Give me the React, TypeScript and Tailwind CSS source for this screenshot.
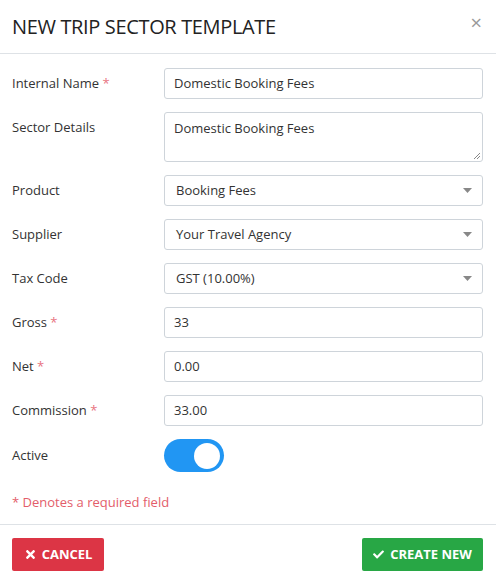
import React from "react";
import { FaTimes, FaCheck } from "react-icons/fa";

const font = { fontFamily: '"Open Sans", "Noto Sans", sans-serif' };

function Label({ text, required }: { text: string; required?: boolean }) {
  return (
    <div className="w-[152px] shrink-0 text-[13px] text-[#333]">
      {text}
      {required && <span className="text-[#e8747f]"> *</span>}
    </div>
  );
}

function InputRow({ label, value, required }: { label: string; value: string; required?: boolean }) {
  return (
    <div className="flex items-center">
      <Label text={label} required={required} />
      <div className="flex-1 h-[31px] border border-[#ced4da] rounded-[3px] px-[9px] flex items-center text-[13px] text-[#333]">
        {value}
      </div>
    </div>
  );
}

function SelectRow({ label, value }: { label: string; value: string }) {
  return (
    <div className="flex items-center">
      <Label text={label} />
      <div className="flex-1 h-[31px] border border-[#ced4da] rounded-[3px] pl-[11px] pr-[10px] flex items-center justify-between text-[13px] text-[#333]">
        <span>{value}</span>
        <svg width="9" height="5" viewBox="0 0 9 5">
          <path d="M0 0 L9 0 L4.5 5 Z" fill="#888" />
        </svg>
      </div>
    </div>
  );
}

export default function App() {
  return (
    <div className="w-[496px] h-[581px] bg-white overflow-hidden" style={font}>
      <div className="h-[54px] border-b border-[#dee2e6] flex items-center justify-between pl-[12px] pr-[14px]">
        <div className="text-[20px] text-[#222] tracking-[-0.35px] pt-[1px]">NEW TRIP SECTOR TEMPLATE</div>
        <div className="text-[20px] text-[#999] leading-none -mt-[8px]">×</div>
      </div>
      <div className="pt-[14px] pl-[12px] pr-[13px] flex flex-col gap-[13px]">
        <InputRow label="Internal Name" required value="Domestic Booking Fees" />
        <div className="flex items-start">
          <div className="pt-[6px]"><Label text="Sector Details" /></div>
          <div className="relative flex-1 h-[50px] border border-[#ced4da] rounded-[3px] px-[9px] pt-[6px] text-[13px] text-[#333]">
            Domestic Booking Fees
            <svg className="absolute right-[1px] bottom-[1px]" width="8" height="8" viewBox="0 0 8 8">
              <path d="M7 1 L1 7 M7 4 L4 7" stroke="#888" strokeWidth="1" />
            </svg>
          </div>
        </div>
        <SelectRow label="Product" value="Booking Fees" />
        <SelectRow label="Supplier" value="Your Travel Agency" />
        <SelectRow label="Tax Code" value="GST (10.00%)" />
        <InputRow label="Gross" required value="33" />
        <InputRow label="Net" required value="0.00" />
        <InputRow label="Commission" required value="33.00" />
        <div className="flex items-center">
          <Label text="Active" />
          <div className="w-[60px] h-[33px] rounded-full bg-[#2196f3] flex items-center justify-end pr-[4px]">
            <div className="w-[26px] h-[26px] rounded-full bg-white" />
          </div>
        </div>
      </div>
      <div className="h-[52px] pl-[12px] pt-[21px] text-[13px] leading-[18px] text-[#e35d6a]">* Denotes a required field</div>
      <div className="border-t border-[#dee2e6] pt-[13px] px-[12px] pr-[13px] flex justify-between">
        <button className="h-[33px] w-[92px] bg-[#dc3545] rounded-[2px] text-white text-[13px] font-bold flex items-center justify-center gap-[5px]">
          <FaTimes className="w-[13px] h-[13px]" />
          CANCEL
        </button>
        <button className="h-[33px] w-[121px] bg-[#28a745] rounded-[2px] text-white text-[13px] font-bold flex items-center justify-center gap-[6px]">
          <FaCheck className="w-[11px] h-[11px]" />
          CREATE NEW
        </button>
      </div>
    </div>
  );
}
